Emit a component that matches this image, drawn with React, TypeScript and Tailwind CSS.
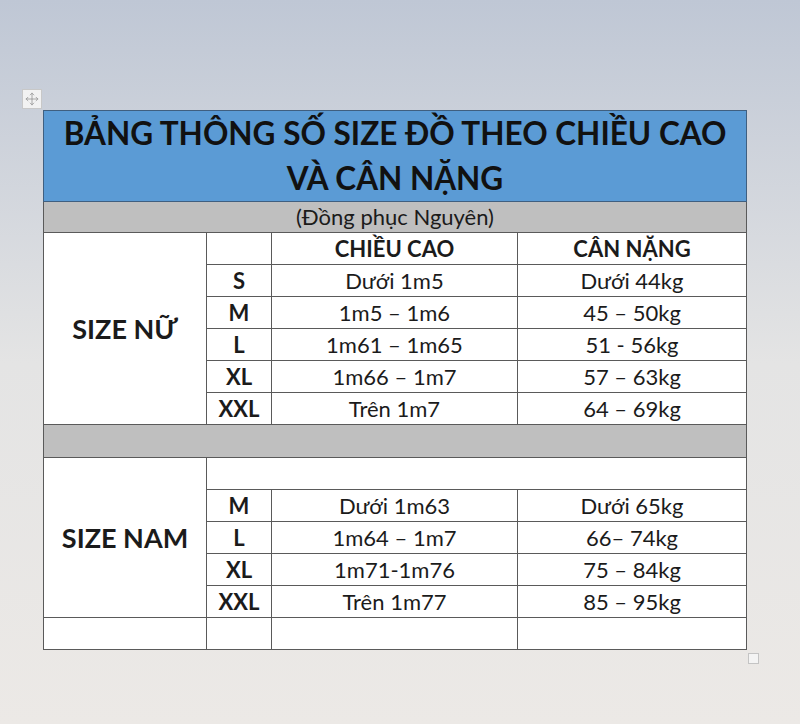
import { Move } from 'lucide-react'

const women = [
  { size: 'S', height: 'Dưới 1m5', weight: 'Dưới 44kg' },
  { size: 'M', height: '1m5 – 1m6', weight: '45 – 50kg' },
  { size: 'L', height: '1m61 – 1m65', weight: '51 - 56kg' },
  { size: 'XL', height: '1m66 – 1m7', weight: '57 – 63kg' },
  { size: 'XXL', height: 'Trên 1m7', weight: '64 – 69kg' },
]

const men = [
  { size: 'M', height: 'Dưới 1m63', weight: 'Dưới 65kg' },
  { size: 'L', height: '1m64 – 1m7', weight: '66– 74kg' },
  { size: 'XL', height: '1m71-1m76', weight: '75 – 84kg' },
  { size: 'XXL', height: 'Trên 1m77', weight: '85 – 95kg' },
]

const cell = 'border border-[#5a5a5a] text-center p-0 leading-none'

export default function App() {
  return (
    <div className="w-[800px] h-[724px] bg-gradient-to-b from-[#bfc7d5] via-[#e4e4e4] to-[#ece9e6] pt-[110px] pl-[43px] font-['Lato','Liberation_Sans',sans-serif] text-[#1b1b1b]">
      <div className="relative w-[703px]">
        <div className="absolute -left-[21px] -top-[21px] w-[20px] h-[20px] border border-[#c8c8c8] bg-[#f2f2f2] flex items-center justify-center text-[#8a8a8a]">
          <Move className="w-[14px] h-[14px]" strokeWidth={1.25} />
        </div>
        <table className="w-[703px] border-collapse table-fixed text-[22px]">
          <colgroup>
            <col className="w-[163px]" />
            <col className="w-[65px]" />
            <col className="w-[246px]" />
            <col className="w-[229px]" />
          </colgroup>
          <tbody>
            <tr>
              <td colSpan={4} className="border border-[#3f5f80] bg-[#5b9bd5] text-center font-bold text-[31.5px] leading-[45px] h-[91px] p-0 text-[#111]">
                BẢNG THÔNG SỐ SIZE ĐỒ THEO CHIỀU CAO<br />VÀ CÂN NẶNG
              </td>
            </tr>
            <tr>
              <td colSpan={4} className={`${cell} bg-[#bfbfbf] h-[31px]`}>(Đồng phục Nguyên)</td>
            </tr>
            <tr className="h-[32px]">
              <td rowSpan={6} className={`${cell} bg-white font-bold text-[27px]`}>SIZE NỮ</td>
              <td className={`${cell} bg-white`}></td>
              <td className={`${cell} bg-white font-bold`}>CHIỀU CAO</td>
              <td className={`${cell} bg-white font-bold`}>CÂN NẶNG</td>
            </tr>
            {women.map(r => (
              <tr key={'w' + r.size} className="h-[32px]">
                <td className={`${cell} bg-white font-bold`}>{r.size}</td>
                <td className={`${cell} bg-white`}>{r.height}</td>
                <td className={`${cell} bg-white`}>{r.weight}</td>
              </tr>
            ))}
            <tr className="h-[33px]">
              <td colSpan={4} className={`${cell} bg-[#bfbfbf]`}></td>
            </tr>
            <tr className="h-[32px]">
              <td rowSpan={5} className={`${cell} bg-white font-bold text-[27px]`}>SIZE NAM</td>
              <td colSpan={3} className={`${cell} bg-white`}></td>
            </tr>
            {men.map(r => (
              <tr key={'m' + r.size} className="h-[32px]">
                <td className={`${cell} bg-white font-bold`}>{r.size}</td>
                <td className={`${cell} bg-white`}>{r.height}</td>
                <td className={`${cell} bg-white`}>{r.weight}</td>
              </tr>
            ))}
            <tr className="h-[32px]">
              <td className={`${cell} bg-white`}></td>
              <td className={`${cell} bg-white`}></td>
              <td className={`${cell} bg-white`}></td>
              <td className={`${cell} bg-white`}></td>
            </tr>
          </tbody>
        </table>
        <div className="absolute -right-[13px] -bottom-[14px] w-[11px] h-[11px] border border-[#c4c4c4] bg-[#f4f4f4]" />
      </div>
    </div>
  )
}
